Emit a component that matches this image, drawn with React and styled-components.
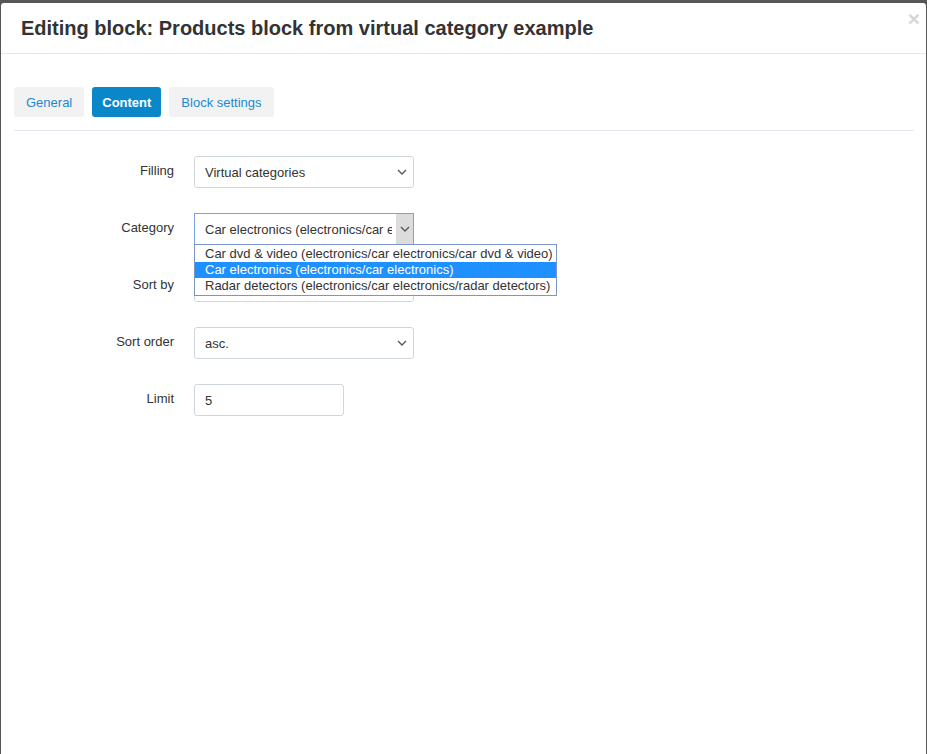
import React from 'react';
import styled, { createGlobalStyle } from 'styled-components';

const GlobalStyle = createGlobalStyle`
  html, body {
    margin: 0;
    padding: 0;
    height: 100%;
    background: #575757;
    font-family: "Liberation Sans", Arial, sans-serif;
    overflow: hidden;
  }
`;

const rows = [
  { label: 'Filling', value: 'Virtual categories', kind: 'select' },
  { label: 'Category', value: 'Car electronics (electronics/car electronics)', kind: 'select', focused: true },
  { label: 'Sort by', value: 'Position', kind: 'select' },
  { label: 'Sort order', value: 'asc.', kind: 'select' },
  { label: 'Limit', value: '5', kind: 'input' },
];

const options = [
  'Car dvd & video (electronics/car electronics/car dvd & video)',
  'Car electronics (electronics/car electronics)',
  'Radar detectors (electronics/car electronics/radar detectors)',
];

const tabs = ['General', 'Content', 'Block settings'];

function Chevron() {
  return (
    <svg width="10" height="6" viewBox="0 0 10 6">
      <path d="M1 1l4 4 4-4" fill="none" stroke="#555" strokeWidth="1.3" />
    </svg>
  );
}

function App() {
  const [activeTab, setActiveTab] = React.useState('Content');

  return (
    <>
      <GlobalStyle />
      <Modal>
        <Header>
          <Title>Editing block: Products block from virtual category example</Title>
          <Close>×</Close>
        </Header>
        <Body>
          <Tabs>
            {tabs.map((t) => (
              <Tab key={t} $active={t === activeTab} onClick={() => setActiveTab(t)}>
                {t}
              </Tab>
            ))}
          </Tabs>
          <Form>
            {rows.map((r) => (
              <Row key={r.label}>
                <Label>{r.label}</Label>
                {r.kind === 'select' ? (
                  <SelectWrap>
                    <FakeSelect $focused={r.focused}>
                      <SelectText $focused={r.focused}>{r.value}</SelectText>
                      <Arrow $focused={r.focused}>
                        <Chevron />
                      </Arrow>
                    </FakeSelect>
                    {r.focused && (
                      <ListBox>
                        {options.map((o, i) => (
                          <Option key={o} $selected={i === 1}>
                            {o}
                          </Option>
                        ))}
                      </ListBox>
                    )}
                  </SelectWrap>
                ) : (
                  <Input defaultValue={r.value} />
                )}
              </Row>
            ))}
          </Form>
        </Body>
      </Modal>
    </>
  );
}

const Modal = styled.div`
  margin: 3px 1px 0 1px;
  height: calc(100vh - 3px);
  background: #fff;
  border-radius: 3px 3px 0 0;
  box-sizing: border-box;
`;

const Header = styled.div`
  position: relative;
  height: 50px;
  padding: 0 20px;
  display: flex;
  align-items: center;
  border-bottom: 1px solid #e5e9ec;
`;

const Title = styled.h3`
  margin: 0;
  font-size: 20px;
  font-weight: bold;
  color: #333;
`;

const Close = styled.span`
  position: absolute;
  top: 4px;
  right: 6px;
  font-size: 21px;
  line-height: 24px;
  font-weight: bold;
  color: #d6d6d6;
`;

const Body = styled.div`
  padding: 33px 12px 0 13px;
`;

const Tabs = styled.div`
  display: flex;
  gap: 8px;
  padding-bottom: 13px;
  border-bottom: 1px solid #e2e8ee;
`;

const Tab = styled.button`
  height: 30px;
  padding: 0 ${(p) => (p.$active ? '10px' : '12px')};
  border: none;
  border-radius: 3px;
  font-family: inherit;
  font-size: 13px;
  font-weight: ${(p) => (p.$active ? 'bold' : 'normal')};
  background: ${(p) => (p.$active ? '#0a87c9' : '#f2f2f2')};
  color: ${(p) => (p.$active ? '#fff' : '#1a8ad0')};
  cursor: pointer;
`;

const Form = styled.div`
  padding-top: 25px;
  display: flex;
  flex-direction: column;
  gap: 25px;
`;

const Row = styled.div`
  display: flex;
  align-items: flex-start;
`;

const Label = styled.div`
  width: 160px;
  text-align: right;
  padding-top: 7px;
  padding-right: 20px;
  font-size: 13px;
  color: #333;
  line-height: 15px;
`;

const SelectWrap = styled.div`
  position: relative;
`;

const FakeSelect = styled.div`
  width: 220px;
  height: 32px;
  box-sizing: border-box;
  display: flex;
  align-items: center;
  border: 1px solid ${(p) => (p.$focused ? '#7ba1e8' : '#cfd6dc')};
  border-radius: ${(p) => (p.$focused ? '0' : '3px')};
  background: #fff;
  font-size: 13px;
  color: #333;
  overflow: hidden;
`;

const SelectText = styled.span`
  flex: 1;
  padding-left: 10px;
  margin-right: ${(p) => (p.$focused ? '4px' : '0')};
  white-space: nowrap;
  overflow: hidden;
  text-overflow: clip;
`;

const Arrow = styled.span`
  width: 17px;
  height: 100%;
  display: flex;
  align-items: center;
  justify-content: center;
  background: ${(p) => (p.$focused ? '#dcdcdc' : 'transparent')};
  margin-right: ${(p) => (p.$focused ? '0' : '3px')};
`;

const ListBox = styled.div`
  position: absolute;
  top: 31px;
  left: 0;
  z-index: 2;
  background: #fff;
  border: 1px solid #7b95c8;
  padding: 1px 0;
  white-space: nowrap;
`;

const Option = styled.div`
  padding: 0 3px 0 10px;
  height: 16px;
  line-height: 16px;
  font-size: 13px;
  color: ${(p) => (p.$selected ? '#fff' : '#333')};
  background: ${(p) => (p.$selected ? '#1e90ff' : 'transparent')};
`;

const Input = styled.input`
  width: 150px;
  height: 32px;
  box-sizing: border-box;
  border: 1px solid #cfd6dc;
  border-radius: 3px;
  padding: 0 10px;
  font-family: inherit;
  font-size: 13px;
  color: #333;
  outline: none;
`;

export default App;
